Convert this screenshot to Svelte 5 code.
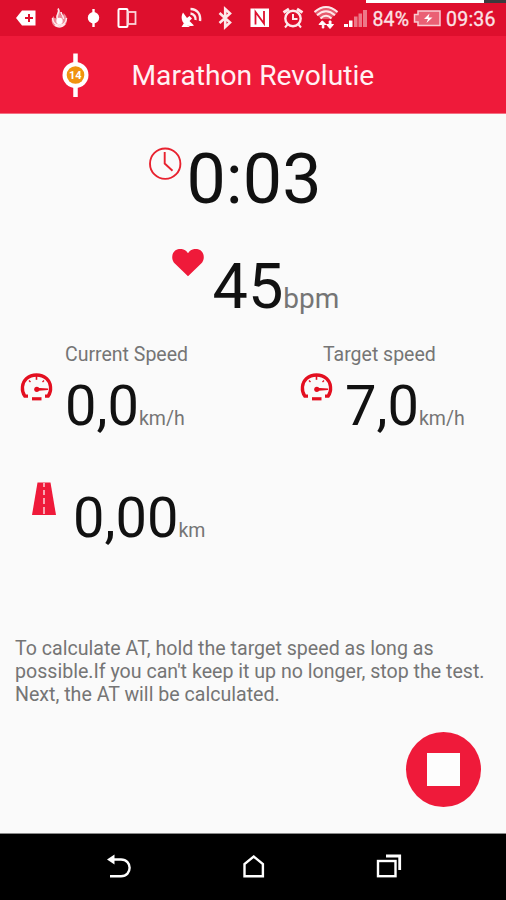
<script>
    const title = 'Marathon Revolutie';
    const elapsed = '0:03';
    const heartRate = 45;
    const distance = '0,00';

    const speeds = [
        { label: 'Current Speed', value: '0,0' },
        { label: 'Target speed', value: '7,0' }
    ];

    let running = true;

    const stopTest = () => {
        running = false;
    };
</script>

<style>
    :global(body) {
        margin: 0;
        background-color: #fafafa;
    }

    .screen {
        display: flex;
        flex-direction: column;
        width: 506px;
        height: 900px;
        overflow: hidden;
        background-color: #fafafa;
        color: #111;
        font-family: Roboto, "Liberation Sans", sans-serif;
    }

    svg {
        display: block;
        flex: none;
    }

    /* Status bar */
    .status-bar {
        position: relative;
        flex: none;
        height: 36px;
        background-color: #de0f2d;
    }

    .status-icons {
        width: 506px;
        height: 36px;
    }

    .status-icons text {
        font-size: 19.5px;
        fill: #fbe3e6;
        stroke: #fbe3e6;
        stroke-width: 0.3;
    }

    .notch {
        position: absolute;
        top: 0;
        right: 0;
        display: flex;
        width: 140px;
        height: 3px;
        background-color: #3b3b3d;
    }

    .notch-light {
        width: 118px;
        background-color: #fff;
    }

    /* App bar */
    .app-bar {
        display: flex;
        flex: none;
        align-items: center;
        box-sizing: border-box;
        height: 78px;
        padding-left: 62px;
        background-color: #ef1a3a;
        border-bottom: 1px solid #f46f82;
    }

    .logo text {
        font-size: 11px;
        font-weight: bold;
        fill: #fff;
    }

    h1 {
        margin: 3px 0 0 42.5px;
        font-size: 28.2px;
        font-weight: 400;
        line-height: 34px;
        color: #fff1f3;
        white-space: nowrap;
    }

    /* Measurements */
    .content {
        flex: 1;
        padding-top: 24px;
    }

    .row {
        display: flex;
        align-items: flex-start;
        white-space: nowrap;
    }

    .value {
        font-size: 56px;
        line-height: 66px;
    }

    .unit {
        font-size: 19.5px;
        line-height: 1;
        color: #757575;
    }

    .time {
        height: 82px;
        padding-left: 149px;
    }

    .time svg {
        margin-top: 9px;
    }

    .time .value {
        margin-left: 4.5px;
        font-size: 70px;
        line-height: 82px;
    }

    .heart-rate {
        height: 75px;
        margin-top: 29px;
        padding-left: 172px;
    }

    .heart-rate .value {
        margin-left: 8.5px;
        font-size: 63px;
        line-height: 75px;
    }

    .heart-rate .unit {
        font-size: 28px;
    }

    .speeds {
        display: grid;
        grid-template-columns: 280px 226px;
        margin-top: 19px;
    }

    .label {
        height: 23px;
        padding-left: 65px;
        font-size: 19.5px;
        line-height: 23px;
        color: #757575;
        white-space: nowrap;
    }

    .speed:last-child .label {
        padding-left: 43px;
    }

    .speed .row {
        margin-top: 7px;
        padding-left: 20px;
    }

    .speed .value {
        margin-left: 12px;
    }

    .distance {
        margin-top: 46px;
        padding-left: 32px;
    }

    .distance svg {
        margin-top: -3px;
    }

    .distance .value {
        margin-left: 17px;
    }

    .hint {
        width: 480px;
        margin: 86px 0 0 15px;
        font-size: 19.6px;
        line-height: 23px;
        color: #757575;
    }

    .actions {
        display: flex;
        justify-content: flex-end;
        margin-top: 26px;
        padding-right: 25px;
    }

    .stop-button {
        display: flex;
        align-items: center;
        justify-content: center;
        width: 75px;
        height: 75px;
        padding: 0;
        border: none;
        border-radius: 50%;
        background-color: #ef1a3a;
        cursor: pointer;
    }

    .stop-icon {
        width: 33px;
        height: 33px;
        background-color: #fdfdfd;
    }

    /* Navigation bar */
    .nav-bar {
        display: flex;
        flex: none;
        box-sizing: border-box;
        height: 67px;
        border-top: 1px solid #8a8a8a;
        background-color: #000;
    }
</style>

<div class="screen">
    <div class="status-bar">
        <svg class="status-icons" viewBox="0 0 506 36" fill="none" stroke="#fde9eb" stroke-width="1.5">
            <!-- Notification tag -->
            <path d="M16 18 L22 10.5 H35.5 V25.5 H22 Z" fill="#fff" stroke="none" />
            <path d="M29 14 V22 M25 18 H33" stroke="#de0f2d" stroke-width="2" />

            <!-- Flame -->
            <path d="M58 8.5 C62 12 59 14 62 16 C63 16 64 14 63.5 13 C67 16 68 20 66 24 C63 29 55 28.5 52.5 24 C51 21 51.5 18 53.5 16 C54 18 55 18.5 56 18 C56.5 14 59 13 58 8.5 Z" fill="#ee8a98" stroke="none" />
            <path d="M58 8.500 C61 13 54.500 15 58 19 M52.500 18 C53 27.500 66 27.500 66.500 18 M55 25 C58 28 62 27 65 24 M61 12 C61 15 64 16 63.500 19" stroke-width="1.6" />
            <circle cx="59.5" cy="21" r="3.2" fill="#fff" stroke="none" />

            <!-- Running test -->
            <path d="M93.5 9 V27" stroke="#fff" stroke-width="2.4" />
            <circle cx="93.5" cy="17.8" r="5.7" fill="#fff" stroke="none" />

            <!-- Dual phone -->
            <rect x="118.5" y="9" width="9" height="18" rx="1" stroke="#fff" stroke-width="2" />
            <rect x="128" y="12" width="7.5" height="12" stroke="#fbd5da" stroke-width="1.8" />

            <!-- GPS dish -->
            <path d="M183 12.5 C179 19 184 28.500 194 25.5 L189.500 21 L192 18.500 L189.500 16 L187 18 Z" fill="#fff" stroke="none" />
            <path d="M190.5 13.5 C194 14 196 17 195.5 20 M190.5 9 C197 9 201 14 200 21" stroke-width="2.4" />
            <path d="M184 23 L181.5 27 H190" fill="#fff" stroke="none" />

            <!-- Bluetooth -->
            <path d="M219.5 13 L230 22.5 L225.2 27 V9 L230 13.5 L219.5 23" stroke-width="2.6" />

            <!-- NFC -->
            <rect x="250.5" y="8.5" width="18.500" height="18.500" fill="#fff" stroke="none" />
            <path d="M255.5 24.5 V12 L264 23.5 V11" stroke="#de0f2d" stroke-width="1.8" />

            <!-- Alarm -->
            <circle cx="293" cy="18.5" r="7.7" stroke-width="2.4" />
            <path d="M293 14 V19 H297.5 M287.5 24.5 L285 27.5 M298.5 24.5 L301 27.5" stroke-width="2" />
            <path d="M283.500 12.500 L289 9 M302.500 12.500 L297 9" stroke-width="3" />

            <!-- Wi-Fi with traffic arrows -->
            <path d="M314 12 Q326 1 338 12 L330.500 19 H321.500 Z" fill="#e85a6e" stroke="none" />
            <path d="M314.5 12 Q326 2 337.5 12 M317 15.300 Q326 7.300 335 15.300 M320.500 18.500 Q326 13 331.5 18.500" stroke-width="2" />
            <path d="M322.3 28 V24.500 H319 L322.300 20.800 L326 24.500 H323.800 V28 Z M329.200 21 V24.500 H326.500 L330 28.500 L333.500 24.500 H331 V21 Z" fill="#fff" stroke="#fff" stroke-width="1" />

            <!-- Signal -->
            <path d="M344 27 V24 H348 V27 Z M349 27 V20.5 H352.5 V27 Z" fill="#fff" stroke="none" />
            <path d="M354 27 V16.5 H357.5 V27 Z M358.5 27 V13.5 H362 V27 Z M363 27 V10 H367 V27 Z" fill="#ed7888" stroke="none" />

            <text x="372.5" y="26" textLength="36.5">84%</text>

            <!-- Battery -->
            <path d="M418 11 H440 V25.5 H418 V22 H414.5 V14.5 H418 Z" fill="#ea6074" stroke="#f9cdd3" />
            <path d="M429.5 13.5 L424 19 H428 L426.5 23 L432.5 17.5 H428.5 Z" fill="#fff" stroke="none" />

            <text x="446" y="26" textLength="49.5">09:36</text>
        </svg>
        <div class="notch"><div class="notch-light"></div></div>
    </div>

    <div class="app-bar">
        <svg class="logo" width="27" height="46" viewBox="0 0 27 46">
            <path d="M13.5 1.5 V45" stroke="#fff" stroke-width="4.5" />
            <circle cx="13.5" cy="23" r="13" fill="#fff" />
            <circle cx="13.5" cy="23" r="8.8" fill="#f0930f" />
            <text x="13.3" y="27" text-anchor="middle">14</text>
        </svg>
        <h1>{title}</h1>
    </div>

    <div class="content">
        <div class="row time">
            <svg width="33" height="33" viewBox="0 0 33 33" fill="none" stroke="#e8222f">
                <circle cx="16.2" cy="16.7" r="15.2" stroke-width="1.9" />
                <path d="M15.7 5 V16.5 L23.5 23.7" stroke-width="1.9" />
            </svg>
            <div class="value">{elapsed}</div>
        </div>

        <div class="row heart-rate">
            <svg width="32" height="28" viewBox="0 0 32 28">
                <path d="M16 27.3 L2.8 14.5 C-1 10.5 -0.5 4.5 3.5 1.3 C7.5 -1.3 13 -0.3 16 4.2 C19 -0.3 24.5 -1.3 28.5 1.3 C32.5 4.5 33 10.5 29.2 14.5 Z" fill="#ef1a3a" />
            </svg>
            <div class="value">{heartRate}<span class="unit">bpm</span></div>
        </div>

        <div class="speeds">
            {#each speeds as speed}
                <div class="speed">
                    <div class="label">{speed.label}</div>
                    <div class="row">
                        <svg width="33" height="28" viewBox="0 0 33 28" fill="none" stroke="#e30f20">
                            <path d="M8 23.2 H4.800 C1 17.5 1.800 9.700 6.500 5.600 C12 0.800 21 0.800 26.500 5.600 C31.200 9.700 32 17.500 28.200 23.200 H25" stroke-width="3.3" />
                            <path d="M16.5 2 V6.8" stroke-width="1.6" />
                            <path d="M9 7.500 L10.500 9 M24 7.500 L22.500 9" stroke-width="1.400" />
                            <path d="M12 25.8 H21.5" stroke-width="3.2" />
                            <path d="M16 14.800 L28 15.4 V17 L16 17.9 Z" fill="#e30f20" stroke="none" />
                            <circle cx="16.8" cy="16.3" r="2.6" fill="#e30f20" stroke="none" />
                        </svg>
                        <div class="value">{speed.value}<span class="unit">km/h</span></div>
                    </div>
                </div>
            {/each}
        </div>

        <div class="row distance">
            <svg width="24" height="33" viewBox="0 0 24 33">
                <path d="M5.5 0.5 H18.5 L24 33 H0 Z" fill="#ef1a3a" />
                <path d="M12 1 V5 M12 8 V13 M12 16 V22 M12 25 V32" stroke="#fcd5da" stroke-width="1.5" />
            </svg>
            <div class="value">{distance}<span class="unit">km</span></div>
        </div>

        <p class="hint">
            To calculate AT, hold the target speed as long as<br />
            possible.If you can't keep it up no longer, stop the test.<br />
            Next, the AT will be calculated.
        </p>

        <div class="actions">
            <button class="stop-button" aria-label="Stop test" disabled={!running} on:click={stopTest}>
                <span class="stop-icon"></span>
            </button>
        </div>
    </div>

    <div class="nav-bar">
        <svg width="506" height="66" viewBox="0 0 506 66" fill="none" stroke="#fff" stroke-width="2.4">
            <path d="M113 25.5 H121 C132.5 25.5 132.5 42.2 121 42.2 H110" />
            <path d="M107 25.5 L114.5 20.5 V30.5 Z" fill="#fff" stroke="none" />
            <path d="M244.5 42.2 V30 L253.7 22.5 L262.9 30 V42.2 Z" />
            <rect x="378" y="27" width="17.5" height="15.2" />
            <path d="M386 22 H399.7 V36" stroke-width="2.8" />
        </svg>
    </div>
</div>
